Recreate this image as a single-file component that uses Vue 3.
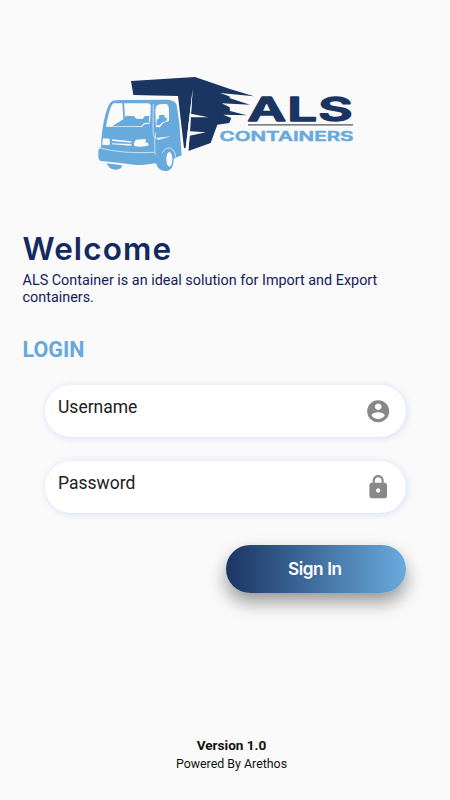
<script setup>
import { ref } from 'vue'
const username = ref('')
const password = ref('')
</script>

<template>
  <main class="screen">
    <svg class="logo" viewBox="90 65 270 115" role="img" aria-label="ALS Containers">
      <g transform="translate(90 65) scale(.33333)">
        <path class="navy" d="M123 48 L315 36 L420 72 L492 94 L390 84 L418 94 L420 100 L480 119 L395 115 L419 127 L420 138 L471 151 L400 149 L424 159 L418 174 L382 179 L362 234 L295 258 L299 212 L348 202 L300 199 L302 157 L355 157 L303 146 L308 74 L287 250 L282 249 L264 93 L130 90 Z" />
        <path class="gap" d="M308 72 L303 146 L302 157 L300 199 L299 212 L295 258 L287 250 Z" />
        <path class="blue" d="M67 108 Q78 104 115 105 L232 104 Q255 105 260 120 L268 174 L275 271 L251 281 Q251 319 225 318 Q202 316 198 295 L163 299 Q155 301 139 300 L72 292 L31 288 Q24 283 25 269 L25 257 Q26 248 33 247 L34 224 Q39 161 54 125 Q59 112 67 108 Z" />
        <path class="blue" d="M50 295 L96 301 Q96 314 77 314 Q57 314 50 295 Z" />
        <path class="paper" d="M72 115 L174 115 Q183 116 182 124 L181 162 L178 176 L163 178 L156 186 L48 185 Q54 147 64 123 Q67 116 72 115 Z" />
        <path class="blue" d="M97 112 L102 112 L105 156 L111 152 L133 154 L138 161 L158 162 L164 153 L178 153 L177 173 L162 174 L154 184 L66 184 L100 163 Z" />
        <path class="paper" d="M202 120 Q208 116 229 117 Q237 119 237 137 L237 168 L221 173 L209 187 L198 186 L196 138 Q196 124 202 120 Z" />
        <path class="blue" d="M201 164 L207 160 L208 150 L223 150 L224 158 L231 159 L229 169 L219 171 L208 181 L199 181 Z" />
        <path class="paper" d="M39 220 L58 221 Q62 233 58 241 L36 239 Z M67 223 L124 229 L124 233 L66 228 Z M66 235 L124 237 L124 242 L66 238 Z M138 224 L168 222 L166 232 Q177 233 176 241 Q156 248 133 243 Q129 234 138 224 Z" />
        <path class="seam" d="M28 249 Q98 267 193 262 M190 117 L189 190 Q188 205 194 220 L195 268 M196 202 L197 222 M217 264 Q225 247 241 249 Q257 258 257 277" />
        <path class="paper" d="M199 219 L243 214 L204 225 Z" />
        <ellipse class="paper" cx="238" cy="283" rx="9" ry="22" />
      </g>
      <text class="brand" x="247.5" y="120.6" textLength="106.5" lengthAdjust="spacingAndGlyphs">ALS</text>
      <rect class="rule" x="248" y="124" width="105" height="1.7" />
      <text class="subbrand" x="219.500" y="141" textLength="134" lengthAdjust="spacingAndGlyphs">CONTAINERS</text>
    </svg>

    <h1 class="welcome">Welcome</h1>
    <p class="intro">ALS Container is an ideal solution for Import and Export containers.</p>
    <h2 class="login">LOGIN</h2>

    <form class="form" @submit.prevent>
      <label class="field">
        <input v-model="username" type="text" placeholder="Username" />
        <svg class="icon" viewBox="0 0 24 24"><path d="M12 2C6.48 2 2 6.48 2 12s4.48 10 10 10 10-4.48 10-10S17.52 2 12 2zm0 3c1.66 0 3 1.34 3 3s-1.34 3-3 3-3-1.34-3-3 1.34-3 3-3zm0 14.2c-2.5 0-4.71-1.28-6-3.22.03-1.99 4-3.08 6-3.08 1.99 0 5.97 1.09 6 3.08-1.29 1.94-3.5 3.22-6 3.22z" /></svg>
      </label>
      <label class="field">
        <input v-model="password" type="password" placeholder="Password" />
        <svg class="icon" viewBox="0 0 24 24"><path d="M18 8h-1V6c0-2.76-2.24-5-5-5S7 3.24 7 6v2H6c-1.1 0-2 .9-2 2v10c0 1.1.9 2 2 2h12c1.1 0 2-.9 2-2V10c0-1.1-.9-2-2-2zm-6 9c-1.1 0-2-.9-2-2s.9-2 2-2 2 .9 2 2-.9 2-2 2zm3.1-9H8.9V6c0-1.71 1.39-3.1 3.1-3.1s3.1 1.39 3.1 3.1v2z" /></svg>
      </label>
      <button class="signin" type="submit">Sign In</button>
    </form>

    <footer class="footer">
      <strong class="version">Version 1.0</strong>
      <span class="powered">Powered By Arethos</span>
    </footer>
  </main>
</template>

<style>
body { background: #fafafa; }
</style>

<style scoped>
.screen {
  box-sizing: border-box;
  width: 450px;
  height: 800px;
  padding: 65px 22px 0;
  display: flex;
  flex-direction: column;
  background: #fafafa;
  font-family: Roboto, sans-serif;
  overflow: hidden;
}
.logo { width: 270px; height: 115px; margin-left: 68px; flex: none; }
.navy { fill: #1a3562; }
.blue { fill: #69aadd; }
.paper { fill: #fafafa; }
.gap { fill: #fafafa; }
.seam { fill: none; stroke: #fafafa; stroke-width: 2; }
.brand { font: 600 33px Inter, sans-serif; letter-spacing: .8px; fill: #1a3562; stroke: #1a3562; stroke-width: 1.4; stroke-linejoin: round; }
.subbrand { font: 600 13.4px Inter, sans-serif; fill: #69aadd; stroke: #69aadd; stroke-width: .5; stroke-linejoin: round; }
.rule { fill: #808285; }
.welcome {
  margin: 49px 0 0 .5px;
  font: 600 31.500px/40px Inter, sans-serif;
  letter-spacing: 1.1px;
  color: #14295f;
}
.intro {
  margin: 4px 0 0 .5px;
  width: 380px;
  font-size: 14.4px;
  line-height: 16.5px;
  color: #14205a;
}
.login {
  margin: 31px 0 0 .5px;
  font-size: 21.5px;
  line-height: 26px;
  font-weight: 700;
  color: #66a9dc;
}
.form { display: flex; flex-direction: column; margin: 21.8px 22.5px 0; }
.field {
  box-sizing: border-box;
  display: flex;
  align-items: center;
  height: 52.5px;
  margin-bottom: 23.5px;
  padding: 0 14px 0 13.5px;
  border-radius: 27px;
  background: #fff;
  box-shadow: 1px 1px 6px 1px #dde2fa;
}
.field input {
  flex: 1;
  min-width: 0;
  border: 0;
  padding: 0 0 8px;
  outline: 0;
  background: transparent;
  font: 400 17.5px/20px Roboto, sans-serif;
  color: #202020;
}
.field input::placeholder { color: #202020; opacity: 1; }
.icon { width: 26.4px; height: 26.4px; fill: #888; flex: none; }
.signin {
  align-self: flex-end;
  width: 180px;
  height: 48px;
  margin-top: 8px;
  padding: 0 1.5px 0 0;
  border: 0;
  border-radius: 24px;
  background: linear-gradient(90deg, #1a3562, #69aadd);
  box-shadow: 0 9px 18px rgba(0, 0, 0, .4);
  color: #fff;
  font: 600 17.2px/20px Inter, sans-serif;
  letter-spacing: -.4px;
}
.footer {
  margin-top: auto;
  padding: 0 0 28px 13px;
  display: flex;
  flex-direction: column;
  align-items: center;
  color: #111;
}
.version { font-size: 13.6px; line-height: 18px; margin-bottom: 1px; }
.powered { font-size: 12.4px; line-height: 17px; }
</style>
